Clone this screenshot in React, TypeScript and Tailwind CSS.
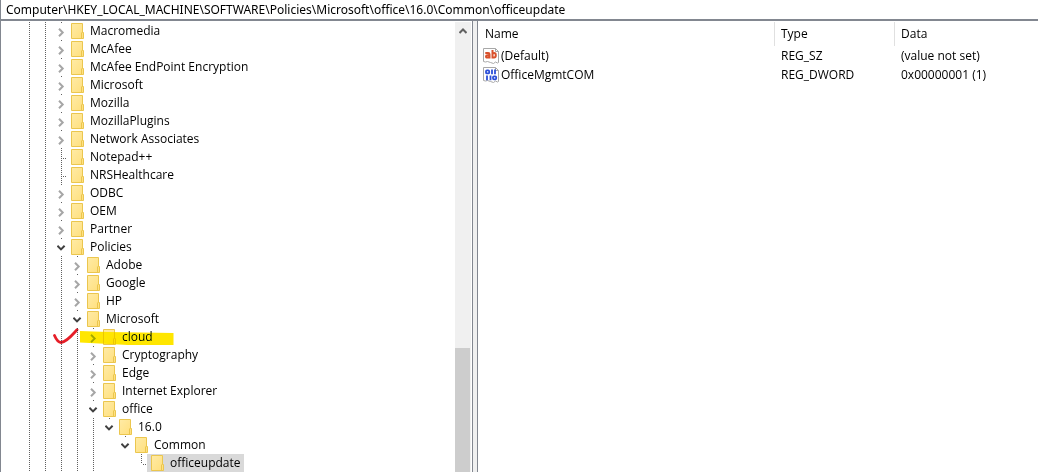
type Row = { name: string; guides: number; toggle: "open" | "closed" | "none"; skip?: number; last?: boolean };

const rows: Row[] = [
  { name: "Macromedia", guides: 2, toggle: "closed" },
  { name: "McAfee", guides: 2, toggle: "closed" },
  { name: "McAfee EndPoint Encryption", guides: 2, toggle: "closed" },
  { name: "Microsoft", guides: 2, toggle: "closed" },
  { name: "Mozilla", guides: 2, toggle: "closed" },
  { name: "MozillaPlugins", guides: 2, toggle: "closed" },
  { name: "Network Associates", guides: 2, toggle: "closed" },
  { name: "Notepad++", guides: 2, toggle: "none" },
  { name: "NRSHealthcare", guides: 2, toggle: "none" },
  { name: "ODBC", guides: 2, toggle: "closed" },
  { name: "OEM", guides: 2, toggle: "closed" },
  { name: "Partner", guides: 2, toggle: "closed" },
  { name: "Policies", guides: 2, toggle: "open" },
  { name: "Adobe", guides: 3, toggle: "closed" },
  { name: "Google", guides: 3, toggle: "closed" },
  { name: "HP", guides: 3, toggle: "closed" },
  { name: "Microsoft", guides: 3, toggle: "open" },
  { name: "cloud", guides: 4, toggle: "closed" },
  { name: "Cryptography", guides: 4, toggle: "closed" },
  { name: "Edge", guides: 4, toggle: "closed" },
  { name: "Internet Explorer", guides: 4, toggle: "closed" },
  { name: "office", guides: 4, toggle: "open" },
  { name: "16.0", guides: 5, toggle: "open", last: true },
  { name: "Common", guides: 5, skip: 1, toggle: "open", last: true },
  { name: "officeupdate", guides: 5, skip: 2, toggle: "none", last: true },
];

const values = [
  { name: "(Default)", type: "REG_SZ", data: "(value not set)", binary: false },
  { name: "OfficeMgmtCOM", type: "REG_DWORD", data: "0x00000001 (1)", binary: true },
];

const dotsDown = "bg-[repeating-linear-gradient(to_bottom,#606060_0_1px,transparent_1px_2px)]";
const dotsAcross = "bg-[repeating-linear-gradient(to_right,#606060_0_1px,transparent_1px_2px)]";

function Folder() {
  return (
    <svg width="13" height="16" viewBox="0 0 13 16" className="shrink-0" aria-hidden="true">
      <defs>
        <linearGradient id="folder" x1="0" y1="0" x2="1" y2="1">
          <stop offset="0" stopColor="#ffeba6" />
          <stop offset="1" stopColor="#ffdf7c" />
        </linearGradient>
      </defs>
      <path d="M.5.5h11v9h1v6h-12z" fill="url(#folder)" stroke="#ebc64e" />
      <path d="M10.5 15V10l1-1" fill="none" stroke="#ebc64e" />
    </svg>
  );
}

function Chevron({ open }: { open: boolean }) {
  return open ? (
    <svg width="9" height="6" viewBox="0 0 9 6" aria-hidden="true">
      <path d="M.4.8 4 4.4 7.600.8" fill="none" stroke="#404040" strokeWidth="2" />
    </svg>
  ) : (
    <svg width="7" height="9" viewBox="0 0 7 9" aria-hidden="true">
      <path d="M1 .8 4.700 4.500 1 8.200" fill="none" stroke="#a6a6a6" strokeWidth="2" />
    </svg>
  );
}

function TreeRow({ row }: { row: Row }) {
  const selected = row.name === "officeupdate";
  const marked = row.name === "cloud";
  return (
    <li role="treeitem" aria-selected={selected} className="relative flex h-[18px]">
      {Array.from({ length: row.guides }, (_, i) => (
        <span key={i} className="flex w-4 shrink-0 justify-center pl-px">
          <span className={`w-px ${dotsDown}`} />
        </span>
      ))}
      {Array.from({ length: row.skip ?? 0 }, (_, i) => (
        <span key={i} className="w-4 shrink-0" />
      ))}
      {row.toggle === "none" ? (
        <span className="flex w-[14px] shrink-0 pl-2">
          <span className={`w-px ${dotsDown} ${row.last ? "h-[10px]" : "h-full"}`} />
          <span className={`mt-[10px] ml-px h-px w-1 ${dotsAcross}`} />
        </span>
      ) : (
        <button
          aria-label={`Toggle ${row.name}`}
          className="flex w-[14px] shrink-0 flex-col items-center pl-[3px]"
        >
          <span className="h-px w-px bg-[#606060]" />
          <span className="flex h-[17px] items-center pt-px">
            <Chevron open={row.toggle === "open"} />
          </span>
        </button>
      )}
      <button
        className={`flex items-center gap-[6px] pr-[3px] pl-1 leading-[18px] whitespace-nowrap ${selected ? "bg-[#d9d9d9]" : ""}`}
      >
        <Folder />
        {row.name}
      </button>
      {marked && (
        <svg
          width="126"
          height="20"
          viewBox="0 0 126 20"
          className="pointer-events-none absolute top-0 left-8 mix-blend-darken"
          aria-hidden="true"
        >
          <path d="M27 3 55 4 120.500 5V17L75 17 27 14.500z" fill="#ffe600" />
          <path d="M1.500 7.500C3 11 5 14.500 8 14.500 14 14 20 6 24 1.800" fill="none" stroke="#e61e28" strokeWidth="2.800" strokeLinecap="round" />
        </svg>
      )}
    </li>
  );
}

function ValueIcon({ binary }: { binary: boolean }) {
  return (
    <svg width="16" height="16" viewBox="0 0 16 16" className="shrink-0" aria-hidden="true">
      <path d="M.5.5h12l3 3v11l-1 .5-2-1-2 1.500-3-1-3-1-2 .5-2-.5z" fill="#fff" stroke="#a8a8a8" />
      <path d="M12.500.5v3h3" fill="none" stroke="#a8a8a8" />
      {binary ? (
        <g fill="none" stroke="#2c4fd8" strokeWidth="1.800">
          <rect x="3" y="3.400" width="3.200" height="3" rx="1" />
          <path d="M9 2.500v4.800M12 2.500v4.800M4 8.500v4.800M7.500 8.500v4.800" />
          <rect x="10" y="9.300" width="3.200" height="3" rx="1" />
        </g>
      ) : (
        <g fill="none" stroke="#d9512c" strokeWidth="2">
          <path d="M2.300 5h2.900q1.300 0 1.300 1.300V10.500M6.500 7.300H4.500Q3 7.300 3 8.500T4.500 9.600Q6 9.600 6.500 8.500" />
          <path d="M9.500 2V10.500M9.500 6Q10 5 11.100 5 12.800 5 12.800 7.300T11.100 9.600Q10 9.600 9.500 8.800" />
        </g>
      )}
    </svg>
  );
}

export default function App() {
  return (
    <div className="flex min-h-screen flex-col border-l border-[#828790] bg-white font-['Open_Sans','Noto_Sans',sans-serif] text-[12px] text-black">
      <input
        aria-label="Registry path"
        readOnly
        value="Computer\HKEY_LOCAL_MACHINE\SOFTWARE\Policies\Microsoft\office\16.0\Common\officeupdate"
        className="h-[21px] w-full border-b-2 border-[#828790] px-[5px] font-['Noto_Sans',sans-serif] leading-[18px] outline-none"
      />
      <div className="flex flex-1">
        <div className="flex w-[472px] shrink-0 border-r border-[#828790] pt-px pr-px">
          <ul role="tree" aria-label="Registry keys" className="min-w-0 flex-1 pl-5">
            {rows.map((row, i) => (
              <TreeRow key={i} row={row} />
            ))}
          </ul>
          <div className="flex w-4 flex-col bg-[#f0f0f0] pr-px">
            <button aria-label="Scroll up" className="flex h-[17px] items-center justify-center">
              <svg width="8" height="6" viewBox="0 0 8 6" aria-hidden="true">
                <path d="M.5 5 4 1.500 7.500 5" fill="none" stroke="#606060" strokeWidth="2" />
              </svg>
            </button>
            <div className="mt-auto h-[124px] bg-[#cdcdcd]" />
          </div>
        </div>
        <div className="w-[5px] shrink-0 border-r border-[#828790] bg-[#f0f0f0]" />
        <div className="min-w-0 flex-1 pt-px">
          <table className="w-full table-fixed border-separate border-spacing-0 text-left">
            <thead>
              <tr className="h-6">
                <th className="w-[297px] border-r border-[#e0e0e0] p-0 pl-[7px] font-normal">Name</th>
                <th className="w-[120px] border-r border-[#e0e0e0] p-0 pl-[6px] font-normal">Type</th>
                <th className="p-0 pl-[6px] font-normal">Data</th>
              </tr>
            </thead>
            <tbody>
              {values.map((v) => (
                <tr key={v.name} className="h-[19px]">
                  <td className="p-0 pl-[5px]">
                    <span className="flex items-center gap-[2px] leading-[19px]">
                      <ValueIcon binary={v.binary} />
                      {v.name}
                    </span>
                  </td>
                  <td className="p-0 pl-[6px] leading-[19px]">{v.type}</td>
                  <td className="p-0 pl-[6px] leading-[19px]">{v.data}</td>
                </tr>
              ))}
            </tbody>
          </table>
        </div>
      </div>
    </div>
  );
}
